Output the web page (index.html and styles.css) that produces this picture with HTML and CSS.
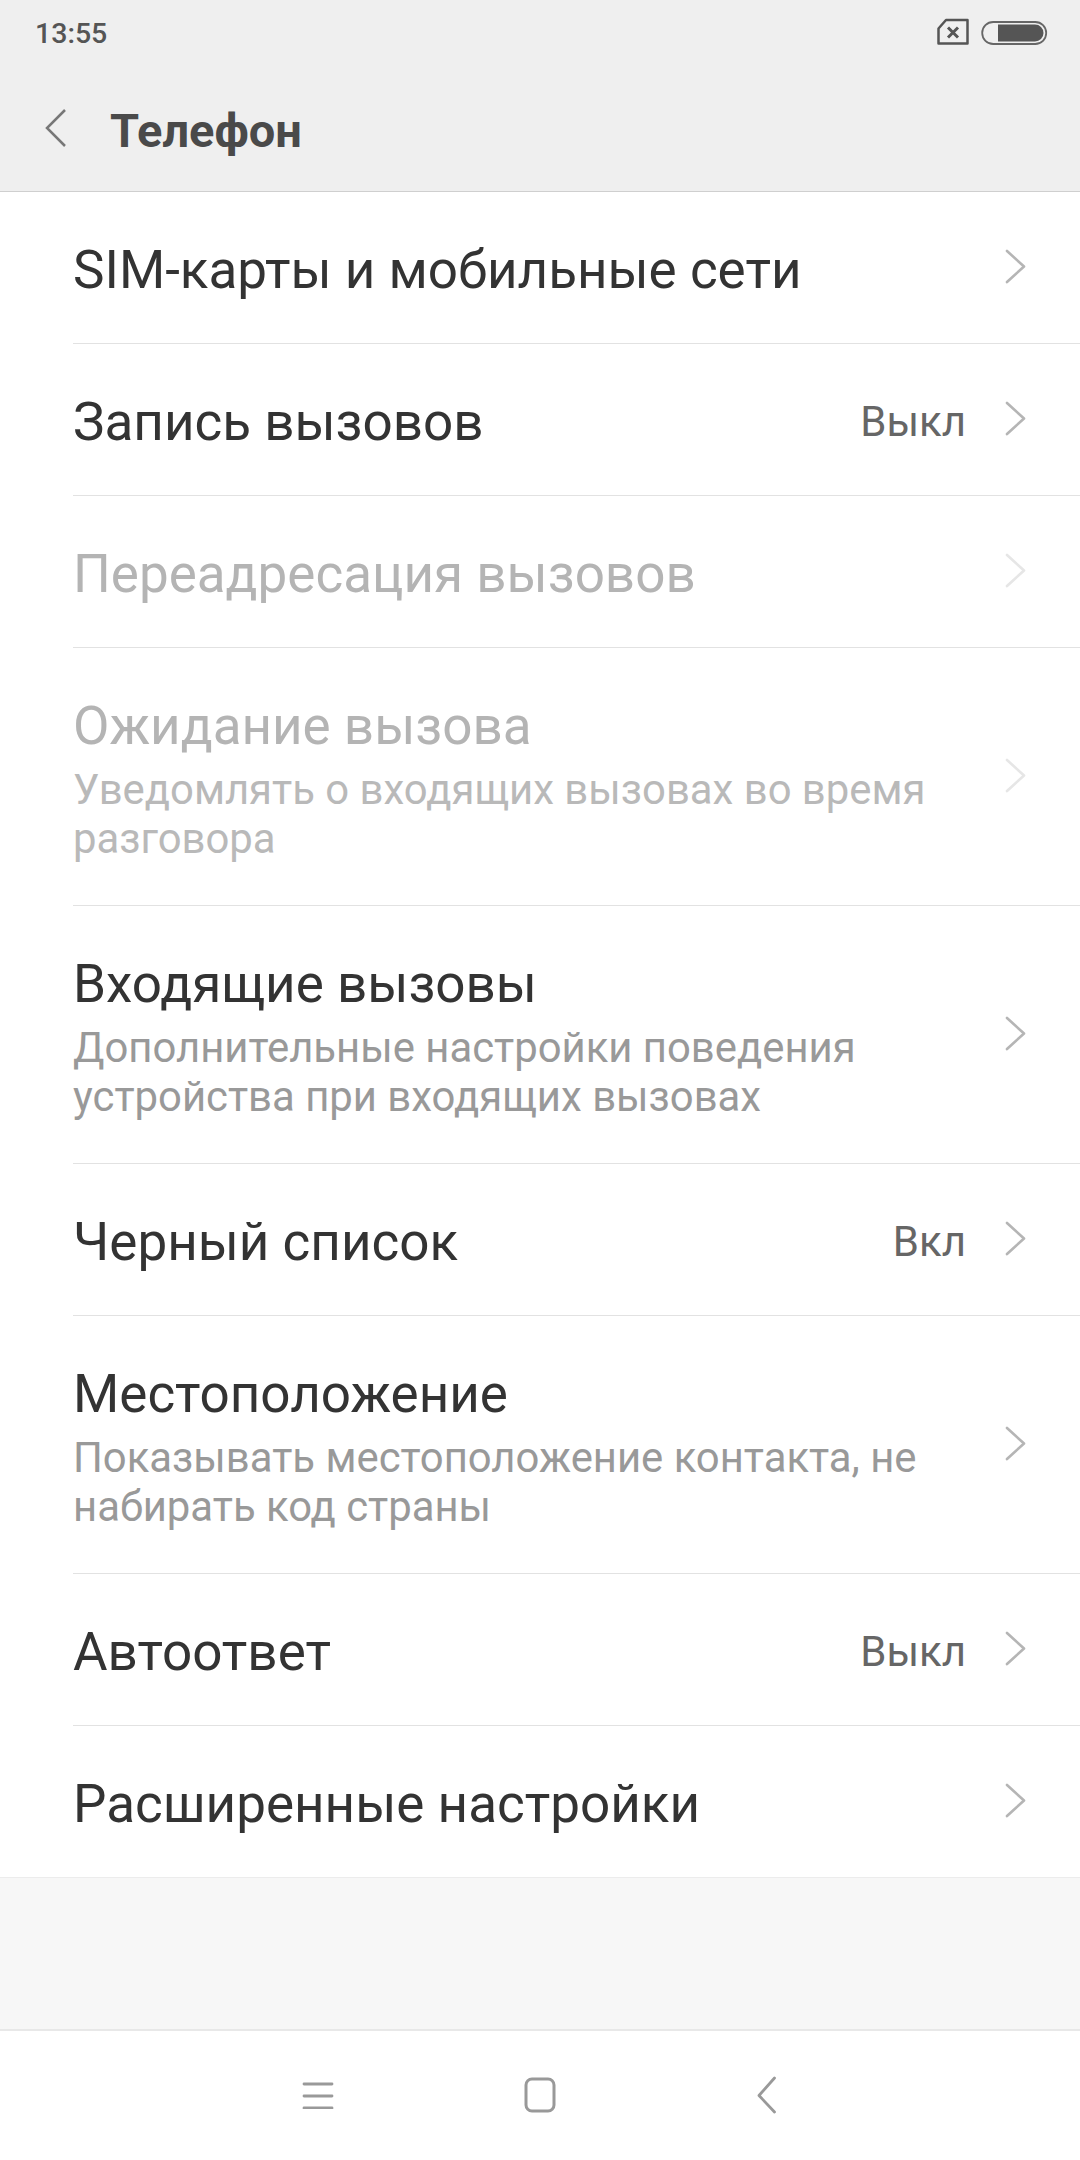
FILE: index.html
```html
<!DOCTYPE html>
<html lang="ru">

<head>
    <title>Телефон</title>
    <meta charset="utf-8">
    <link rel="stylesheet" href="styles.css">
</head>

<body>
    <div class="status-bar">
        <span class="clock">13:55</span>
        <span class="status-icons">
            <svg class="sim-icon" width="34" height="28" viewBox="0 0 34 28">
                <path d="M10 2H31.500V25.500H2.500V10.500Z" fill="none" stroke="#555" stroke-width="2.500" stroke-linejoin="round"/>
                <path d="M12 9.500L22 19.500M22 9.500L12 19.500" fill="none" stroke="#555" stroke-width="3"/>
            </svg>
            <svg class="battery-icon" width="68" height="26" viewBox="0 0 68 26">
                <rect x="1.200" y="2" width="64" height="22" rx="11" fill="none" stroke="#666" stroke-width="1.800"/>
                <path d="M17 4.500H54A8.500 8.500 0 0 1 54 21.500H17Z" fill="#555"/>
            </svg>
        </span>
    </div>

    <div class="title-bar">
        <svg class="back-icon" width="24" height="40" viewBox="0 0 24 40">
            <path d="M21 2L3 20L21 38" fill="none" stroke="#777" stroke-width="2.500"/>
        </svg>
        <span class="page-title">Телефон</span>
    </div>

    <div class="list">
        <div class="row">
            <div class="row-text"><div class="row-title">SIM-карты и мобильные сети</div></div>
            <svg class="chevron" width="22" height="36" viewBox="0 0 22 36"><path d="M2 2L19 17.500L2 33"/></svg>
        </div>
        <div class="row">
            <div class="row-text"><div class="row-title">Запись вызовов</div></div>
            <span class="row-value">Выкл</span>
            <svg class="chevron" width="22" height="36" viewBox="0 0 22 36"><path d="M2 2L19 17.500L2 33"/></svg>
        </div>
        <div class="row disabled">
            <div class="row-text"><div class="row-title">Переадресация вызовов</div></div>
            <svg class="chevron" width="22" height="36" viewBox="0 0 22 36"><path d="M2 2L19 17.500L2 33"/></svg>
        </div>
        <div class="row tall disabled">
            <div class="row-text">
                <div class="row-title">Ожидание вызова</div>
                <div class="row-sub">Уведомлять о входящих вызовах во время разговора</div>
            </div>
            <svg class="chevron" width="22" height="36" viewBox="0 0 22 36"><path d="M2 2L19 17.500L2 33"/></svg>
        </div>
        <div class="row tall">
            <div class="row-text">
                <div class="row-title">Входящие вызовы</div>
                <div class="row-sub">Дополнительные настройки поведения устройства при входящих вызовах</div>
            </div>
            <svg class="chevron" width="22" height="36" viewBox="0 0 22 36"><path d="M2 2L19 17.500L2 33"/></svg>
        </div>
        <div class="row">
            <div class="row-text"><div class="row-title">Черный список</div></div>
            <span class="row-value">Вкл</span>
            <svg class="chevron" width="22" height="36" viewBox="0 0 22 36"><path d="M2 2L19 17.500L2 33"/></svg>
        </div>
        <div class="row tall">
            <div class="row-text">
                <div class="row-title">Местоположение</div>
                <div class="row-sub">Показывать местоположение контакта, не набирать код страны</div>
            </div>
            <svg class="chevron" width="22" height="36" viewBox="0 0 22 36"><path d="M2 2L19 17.500L2 33"/></svg>
        </div>
        <div class="row">
            <div class="row-text"><div class="row-title">Автоответ</div></div>
            <span class="row-value">Выкл</span>
            <svg class="chevron" width="22" height="36" viewBox="0 0 22 36"><path d="M2 2L19 17.500L2 33"/></svg>
        </div>
        <div class="row">
            <div class="row-text"><div class="row-title">Расширенные настройки</div></div>
            <svg class="chevron" width="22" height="36" viewBox="0 0 22 36"><path d="M2 2L19 17.500L2 33"/></svg>
        </div>
    </div>

    <div class="spacer"></div>

    <div class="nav-bar">
        <svg width="32" height="28" viewBox="0 0 32 28">
            <path d="M2 3H30M2 15H30M2 27H30" fill="none" stroke="#999" stroke-width="2.800" stroke-linecap="round"/>
        </svg>
        <svg width="32" height="36" viewBox="0 0 32 36">
            <rect x="2" y="2" width="28" height="32" rx="6" fill="none" stroke="#999" stroke-width="3"/>
        </svg>
        <svg class="nav-back" width="20" height="38" viewBox="0 0 20 38">
            <path d="M17.500 2L2 19.500L17.500 36" fill="none" stroke="#999" stroke-width="2.800" stroke-linecap="round" stroke-linejoin="round"/>
        </svg>
    </div>
</body>

</html>
```

FILE: styles.css
```css
html, body {
    margin: 0;
    padding: 0;
}

body {
    width: 1080px;
    height: 2160px;
    display: flex;
    flex-direction: column;
    background-color: #f7f7f7;
    font-family: Roboto, "Noto Sans", sans-serif;
}

.status-bar {
    height: 65px;
    padding: 0 31px 0 35px;
    display: flex;
    align-items: center;
    justify-content: space-between;
    background-color: #efefef;
}

.clock {
    padding-top: 1px;
    font-size: 28.500px;
    font-weight: 500;
    color: #555;
}

.status-icons {
    display: flex;
    align-items: center;
    gap: 11px;
}

.sim-icon {
    margin-bottom: 2px;
}

.title-bar {
    height: 126px;
    padding-left: 44px;
    display: flex;
    align-items: center;
    background-color: #efefef;
    border-bottom: 1px solid #cfcfcf;
}

.page-title {
    margin-left: 42px;
    padding-top: 4px;
    font-size: 47px;
    font-weight: 700;
    color: #4a4a4a;
}

.list {
    background-color: white;
    border-bottom: 1px solid #ececec;
}

.row {
    height: 151px;
    margin-left: 73px;
    padding-right: 53px;
    display: flex;
    align-items: center;
    border-bottom: 1px solid #e2e2e2;
}

.row:last-child {
    border-bottom: 0;
}

.row.tall {
    height: 257px;
}

.row-text {
    flex: 1;
    min-width: 0;
    padding-top: 4px;
    padding-right: 40px;
}

.row-title {
    font-size: 53px;
    line-height: 62px;
    color: #333;
}

.row-sub {
    margin-top: 8px;
    font-size: 41.850px;
    line-height: 49px;
    color: #999;
}

.row-value {
    margin-right: 39px;
    padding-top: 3px;
    font-size: 42px;
    color: #666;
}

.chevron {
    flex: none;
    margin-bottom: 2px;
}

.chevron path {
    fill: none;
    stroke: #b5b5b5;
    stroke-width: 2.600;
    stroke-linecap: round;
    stroke-linejoin: round;
}

.disabled .row-title {
    color: #b4b4b4;
}

.disabled .row-sub {
    color: #b9b9b9;
}

.disabled .chevron path {
    stroke: #e6e6e6;
}

.spacer {
    flex: 1;
}

.nav-bar {
    height: 127px;
    padding: 0 0 2px 302px;
    display: flex;
    align-items: center;
    gap: 190px;
    background-color: white;
    border-top: 2px solid #e8e8e8;
}

.nav-back {
    margin-left: 11px;
}
```
